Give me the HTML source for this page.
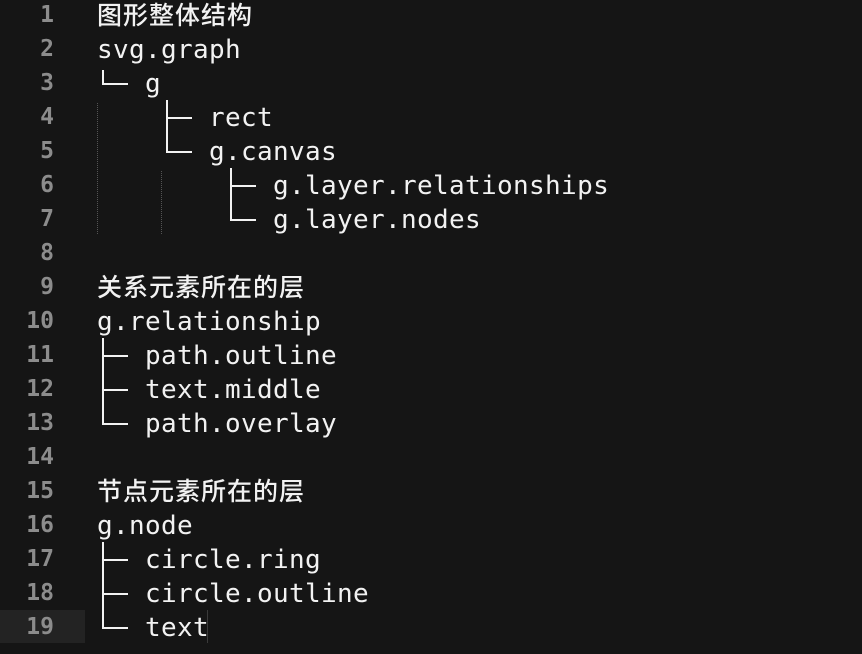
<!DOCTYPE html>
<html><head><meta charset="utf-8"><style>
html,body{margin:0;padding:0;}
body{width:862px;height:654px;background:#151515;position:relative;overflow:hidden;font-family:"DejaVu Sans Mono","Liberation Mono",monospace;}
.hl{position:absolute;left:0;top:610px;width:85px;height:33px;background:#232323;}
.n{position:absolute;left:0;width:54px;text-align:right;color:#8c8c8c;font-weight:bold;font-size:23px;line-height:34px;height:34px;}
.t{position:absolute;color:#f2f2f2;font-size:26px;letter-spacing:0.35px;line-height:34px;height:34px;white-space:pre;margin-top:1px;}
.c{font-family:"Liberation Sans","Noto Sans CJK SC",sans-serif;font-size:25px;letter-spacing:1px;font-weight:500;}
.v{position:absolute;width:2px;background:#f2f2f2;}
.h{position:absolute;height:2px;background:#f2f2f2;}
.g{position:absolute;width:0;border-left:1px dotted #555;}
.cur{position:absolute;left:207px;top:610px;width:1px;height:33px;background:#3a3a3a;}
</style></head><body>
<div class="hl"></div>
<div class="n" style="top:-2px">1</div>
<div class="n" style="top:32px">2</div>
<div class="n" style="top:66px">3</div>
<div class="n" style="top:100px">4</div>
<div class="n" style="top:134px">5</div>
<div class="n" style="top:168px">6</div>
<div class="n" style="top:202px">7</div>
<div class="n" style="top:236px">8</div>
<div class="n" style="top:270px">9</div>
<div class="n" style="top:304px">10</div>
<div class="n" style="top:338px">11</div>
<div class="n" style="top:372px">12</div>
<div class="n" style="top:406px">13</div>
<div class="n" style="top:440px">14</div>
<div class="n" style="top:474px">15</div>
<div class="n" style="top:508px">16</div>
<div class="n" style="top:542px">17</div>
<div class="n" style="top:576px">18</div>
<div class="n" style="top:610px">19</div>

<div class="t c" style="left:97px;top:-2px">图形整体结构</div>
<div class="t" style="left:97px;top:32px">svg.graph</div>
<div class="t" style="left:145px;top:66px">g</div>
<div class="t" style="left:209px;top:100px">rect</div>
<div class="t" style="left:209px;top:134px">g.canvas</div>
<div class="t" style="left:273px;top:168px">g.layer.relationships</div>
<div class="t" style="left:273px;top:202px">g.layer.nodes</div>
<div class="t c" style="left:97px;top:270px">关系元素所在的层</div>
<div class="t" style="left:97px;top:304px">g.relationship</div>
<div class="t" style="left:145px;top:338px">path.outline</div>
<div class="t" style="left:145px;top:372px">text.middle</div>
<div class="t" style="left:145px;top:406px">path.overlay</div>
<div class="t c" style="left:97px;top:474px">节点元素所在的层</div>
<div class="t" style="left:97px;top:508px">g.node</div>
<div class="t" style="left:145px;top:542px">circle.ring</div>
<div class="t" style="left:145px;top:576px">circle.outline</div>
<div class="t" style="left:145px;top:610px">text</div>

<div class="v" style="left:102px;top:70px;height:15px"></div>
<div class="h" style="left:102px;top:83px;width:26px"></div>
<div class="v" style="left:166px;top:100px;height:53px"></div>
<div class="h" style="left:166px;top:117px;width:26px"></div>
<div class="h" style="left:166px;top:151px;width:26px"></div>
<div class="v" style="left:230px;top:168px;height:53px"></div>
<div class="h" style="left:230px;top:185px;width:26px"></div>
<div class="h" style="left:230px;top:219px;width:26px"></div>
<div class="v" style="left:102px;top:338px;height:87px"></div>
<div class="h" style="left:102px;top:355px;width:26px"></div>
<div class="h" style="left:102px;top:389px;width:26px"></div>
<div class="h" style="left:102px;top:423px;width:26px"></div>
<div class="v" style="left:102px;top:542px;height:87px"></div>
<div class="h" style="left:102px;top:559px;width:26px"></div>
<div class="h" style="left:102px;top:593px;width:26px"></div>
<div class="h" style="left:102px;top:627px;width:26px"></div>

<div class="g" style="left:97px;top:103px;height:131px"></div>
<div class="g" style="left:161px;top:171px;height:63px"></div>
<div class="cur"></div>
</body></html>
